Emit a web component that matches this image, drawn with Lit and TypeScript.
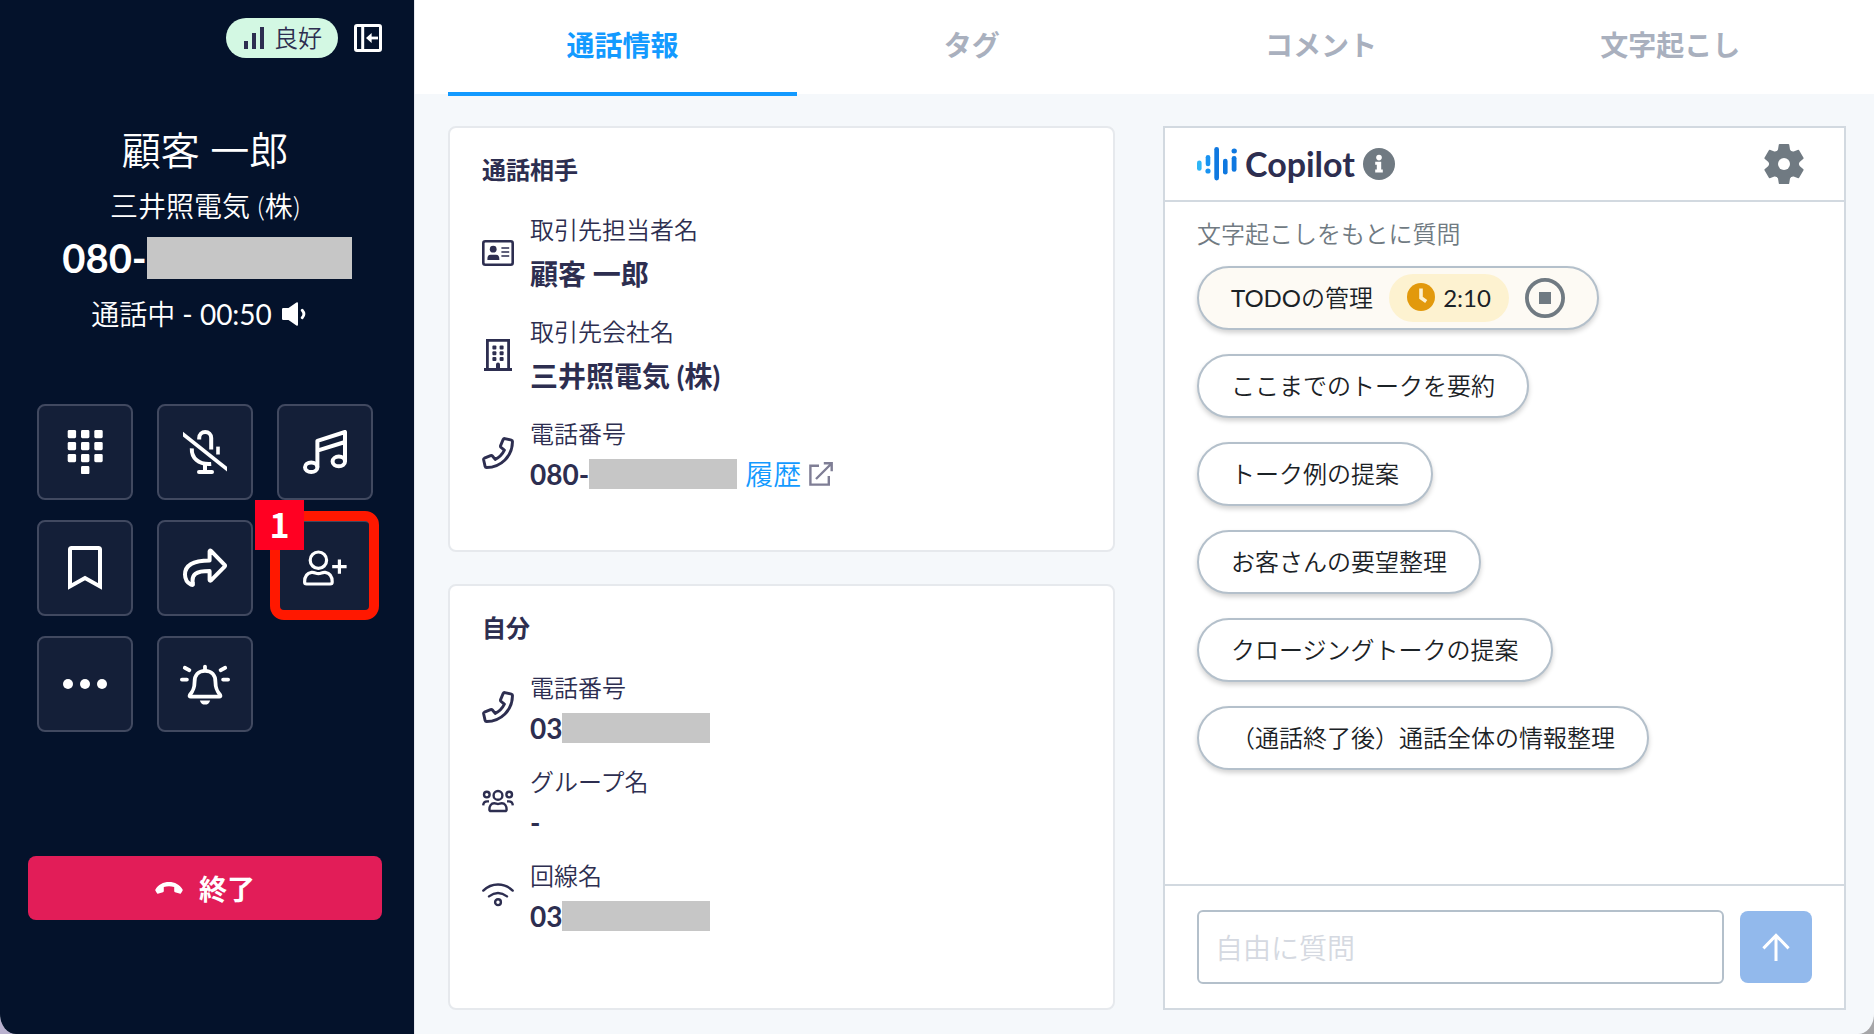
import { LitElement, html, svg, css, nothing } from "lit";
import { customElement, state } from "lit/decorators.js";

const icons = {
  signal: svg`<svg width="20" height="22" viewBox="0 0 20 22" fill="currentColor"><path d="M0 14h4v8H0zM8 6h4v16H8zM16 0h4v22h-4z"/></svg>`,
  collapse: svg`<svg width="28" height="28" viewBox="0 0 28 28" fill="none" stroke="currentColor" stroke-width="3"><rect x="1.5" y="1.5" width="25" height="25" rx="1.5"/><path d="M8.7 2v24"/><path d="M14.5 14H24" stroke-width="2.8"/><path d="M12 14l5.6-5v10z" fill="currentColor" stroke="none"/></svg>`,
  speaker: svg`<svg width="25" height="24" viewBox="0 0 25 24" fill="currentColor"><path d="M0 7.2Q0 6 1.2 6H6.5L14.4.4Q16 -.4 16 1.4V22.6Q16 24.4 14.4 23.6L6.5 18H1.2Q0 18 0 16.8z"/><path d="M20.2 8.2q3.4 3.8 0 7.6" fill="none" stroke="currentColor" stroke-width="2.8" stroke-linecap="round"/></svg>`,
  dialpad: svg`<svg width="44" height="44" viewBox="0 0 44 44" fill="currentColor">${[0, 12, 24].map((y) =>
    [4.7, 18, 31.3].map((x) => svg`<rect x=${x} y=${y} width="8.4" height="8.2" rx="1.4"/>`),
  )}<rect x="18" y="36" width="8.4" height="8.2" rx="1.4"/></svg>`,
  mute: svg`<svg width="44" height="44" viewBox="0 0 44 44" fill="none" stroke="currentColor" stroke-width="4"><path d="M16.2 9.6V8a6 6 0 0 1 12 0v11.6"/><path d="M35 16.6V24.5" stroke-width="3.6"/><path d="M8.8 18.4c-.4 9.4 6.4 16.6 19.4 15.6"/><path d="M22 34v7"/><path d="M16 42h13" stroke-linecap="round"/><path d="M0 1.8V6.6L44 41.6V36.8z" fill="currentColor" stroke="none"/></svg>`,
  music: svg`<svg width="44" height="44" viewBox="0 0 44 44" fill="none" stroke="currentColor" stroke-width="4" stroke-linejoin="round"><ellipse cx="8.2" cy="37.2" rx="6.2" ry="4.8"/><ellipse cx="35.8" cy="31.4" rx="6.2" ry="4.8"/><path d="M14.4 37.2V10.8L42 2V31.4M14.4 20.6L42 12"/></svg>`,
  bookmark: svg`<svg width="44" height="44" viewBox="0 0 44 44" fill="none" stroke="currentColor" stroke-width="4"><path d="M7 40.4V3.6Q7 2 8.6 2H35.4Q37 2 37 3.6V40.4L22 32z"/></svg>`,
  forward: svg`<svg width="44" height="44" viewBox="0 0 44 44" fill="none" stroke="currentColor" stroke-width="4" stroke-linejoin="round"><path d="M26.6 5.4V14.4C11 14.4 2 18.6 2 28.4C2 33.6 4.8 37 8.2 38.8Q10.4 39.8 9.8 37.2C8.4 28.6 12.4 25 26.6 25V34Q26.8 35.2 28 34.4L41.6 20.6Q42.4 19.7 41.6 18.8L28 4.8Q26.8 4 26.6 5.4z"/></svg>`,
  addUser: svg`<svg width="44" height="44" viewBox="0 0 44 44" fill="none" stroke="currentColor" stroke-width="3.2"><circle cx="15.4" cy="14.2" r="8.2"/><path d="M8.6 26.4C11.6 26 12.6 27.6 15.4 27.6S19.2 26 22.2 26.4C27.4 27.2 29.2 31.4 29.2 36Q29.2 38 27.2 38H3.6Q1.6 38 1.6 36C1.6 31.4 3.4 27.2 8.6 26.4z"/><path d="M36.4 13.6v14.2M29.2 20.7H43.6"/></svg>`,
  more: svg`<svg width="44" height="44" viewBox="0 0 44 44" fill="currentColor"><circle cx="5" cy="22" r="5"/><circle cx="22" cy="22" r="5"/><circle cx="39" cy="22" r="5"/></svg>`,
  bell: svg`<svg width="50" height="44" viewBox="0 0 50 44" fill="none" stroke="currentColor" stroke-width="3.8" stroke-linecap="round" stroke-linejoin="round"><path d="M25 8.8C18.4 8.8 14.6 13.4 14.6 19.6C14.6 27.2 12.4 30 9.8 33Q9 34.6 10.8 34.6H39.2Q41 34.6 40.2 33C37.6 30 35.4 27.2 35.4 19.6C35.4 13.4 31.6 8.8 25 8.8zM25 4.6v4M1.9 17.6h5M43.1 17.6h5M4.8 5.8l4.6 2.4M45.2 5.8l-4.6 2.4"/><path d="M19.8 38.4H30.2Q28.8 42.6 25 42.6T19.8 38.4z" fill="currentColor" stroke="none"/></svg>`,
  hangup: svg`<svg width="28" height="12" viewBox="0 0 28 12" fill="currentColor"><path d="M.4 7.4C3.2 2.6 8.2 0 14 0s10.8 2.6 13.6 7.4Q28 8.2 27.4 9L26 11.2Q25.4 12 24.4 11.6L20 10.2Q19.2 9.900 19.2 9V5Q14 3.6 8.800 5V9Q8.8 9.900 8 10.2L3.6 11.6Q2.6 12 2 11.2L.6 9Q0 8.2 .4 7.4z"/></svg>`,
  idCard: svg`<svg width="32" height="26" viewBox="0 0 32 26" fill="none" stroke="currentColor" stroke-width="2.6"><rect x="1.3" y="1.3" width="29.4" height="23.4" rx="2"/><circle cx="11.2" cy="9.2" r="3.4" fill="currentColor" stroke="none"/><path d="M5.4 20Q5 14.8 8.6 14.8H14Q17.6 14.8 17.4 20z" fill="currentColor" stroke="none"/><path d="M19.4 8h7.8M19.4 12h7.8M19.4 16h7.8" stroke-width="1.6"/></svg>`,
  building: svg`<svg width="28" height="32" viewBox="0 0 28 32" fill="currentColor"><path d="M2 0H26V29H28V32H0V29H2zM4.8 2.8V29H12V25.6a2 2 0 0 1 4 0V29H23.2V2.8z" fill-rule="evenodd"/>${[6.4, 12.2, 18].map((y) =>
    [8.4, 15.6].map((x) => svg`<rect x=${x} y=${y} width="4" height="4" rx="1"/>`),
  )}</svg>`,
  phone: svg`<svg width="32" height="32" viewBox="0 0 32 32" fill="none" stroke="currentColor" stroke-width="2.9" stroke-linejoin="round"><path d="M22.8 1.6L29.4 3.1Q30.5 3.4 30.5 4.6C30.5 19 19 30.5 4.6 30.5Q3.4 30.5 3.1 29.4L1.6 22.8Q1.4 21.7 2.4 21.2L8.6 18.6Q9.7 18.2 10.4 19L13.2 22.4Q19.4 19.4 22.4 13.2L19 10.4Q18.2 9.7 18.6 8.6L21.2 2.4Q21.7 1.4 22.8 1.6z"/></svg>`,
  group: svg`<svg width="32" height="24" viewBox="0 0 32 24" fill="none" stroke="currentColor" stroke-width="2.4"><circle cx="16" cy="6.4" r="4.4"/><circle cx="4.8" cy="5.6" r="2.8"/><circle cx="27.2" cy="5.6" r="2.8"/><path d="M12.2 14.2C14 14.2 14.6 15 16 15S18 14.2 19.8 14.2C23 14.2 24.6 17.2 24.6 20.4Q24.6 22 23 22H9Q7.4 22 7.4 20.4C7.4 17.2 9 14.2 12.2 14.2z"/><path d="M1.2 16.4Q1.4 12.4 5.2 12.4H7M30.8 16.4Q30.6 12.4 26.8 12.4H25"/></svg>`,
  wifi: svg`<svg width="32" height="24" viewBox="0 0 32 24" fill="none" stroke="currentColor" stroke-width="2.4" stroke-linecap="round"><path d="M1.3 7.6C9.6 -.6 22.4 -.6 30.7 7.6M7 13.4Q16 6.8 25 13.4"/><circle cx="16" cy="19.2" r="2.9"/></svg>`,
  external: svg`<svg width="24" height="24" viewBox="0 0 24 24" fill="none" stroke="currentColor" stroke-width="2.4"><path d="M10 3.8H1.4V22.6H19.8V14M7 17L22 2M14.8 1.3H22.7V9.2"/></svg>`,
  logo: svg`<svg width="40" height="34" viewBox="0 0 40 34"><rect x="0" y="13.4" width="4.6" height="10.4" rx="2.3" fill="#2eb6f6"/><g fill="#1993f1"><rect x="8.7" y="8" width="4.6" height="11.2" rx="2.3"/><circle cx="11" cy="24" r="2.6"/></g><g fill="#0f78e0"><rect x="17.3" y="0" width="4.7" height="33.4" rx="2.3"/><rect x="26" y="11.7" width="4.6" height="15.8" rx="2.3"/><rect x="34.7" y="9" width="4.8" height="15.8" rx="2.3"/><ellipse cx="37.2" cy="4" rx="2.7" ry="2.5"/></g></svg>`,
  info: svg`<svg width="32" height="32" viewBox="0 0 32 32"><circle cx="16" cy="16" r="16" fill="#707a82"/><circle cx="16" cy="9.6" r="2.8" fill="#fff"/><path d="M12.2 13.8H18.2V21.6H19.8V24.6H12.2V21.6H13.8V16.8H12.2z" fill="#fff"/></svg>`,
  gear: svg`<svg width="40" height="40" viewBox="-20 -20 40 40"><g fill="#707a82"><circle r="14.6"/>${[0, 60, 120, 180, 240, 300].map(
    (a) => svg`<path d="M-4.4-20H4.4Q5-20 5.2-19.4L6-14.6Q6.6-12.6 9-12H-9Q-6.6-12.6-6-14.6L-5.2-19.4Q-5-20-4.4-20z" transform="rotate(${a})"/>`,
  )}</g><circle r="6" fill="#fff"/></svg>`,
  clock: svg`<svg width="28" height="28" viewBox="0 0 28 28"><circle cx="14" cy="14" r="14" fill="#e2990c"/><path d="M14 5.6V14.8L19.2 18.4" fill="none" stroke="#fdf2d0" stroke-width="3.6"/></svg>`,
  stop: svg`<svg width="40" height="40" viewBox="0 0 40 40"><circle cx="20" cy="20" r="18.1" fill="none" stroke="#707a82" stroke-width="3.8"/><path d="M14 14h12v12H14z" fill="#707a82"/></svg>`,
  arrowUp: svg`<svg width="28" height="28" viewBox="0 0 28 28" fill="none" stroke="currentColor" stroke-width="3"><path d="M14 28V2M1.4 15.4L14 2.4L26.6 15.4"/></svg>`,
};

const actions = [
  { label: "ダイヤルパッド", icon: icons.dialpad },
  { label: "ミュート", icon: icons.mute },
  { label: "保留", icon: icons.music },
  { label: "ブックマーク", icon: icons.bookmark },
  { label: "転送", icon: icons.forward },
  { label: "参加者を追加", icon: icons.addUser, mark: "1" },
  { label: "その他", icon: icons.more },
  { label: "呼び出し", icon: icons.bell },
];

const tabs = ["通話情報", "タグ", "コメント", "文字起こし"];

const prompts = [
  "ここまでのトークを要約",
  "トーク例の提案",
  "お客さんの要望整理",
  "クロージングトークの提案",
  "（通話終了後）通話全体の情報整理",
];

@customElement("app-root")
export class AppRoot extends LitElement {
  @state() private tab = 0;

  static styles = css`
    :host {
      display: block;
      background: linear-gradient(90deg, #b9b1cf 0 50%, #a6a6a8 50%);
      font-family: Lato, "Noto Sans CJK JP", sans-serif;
      color: #2d2e50;
    }
    * {
      box-sizing: border-box;
    }
    svg {
      display: block;
      flex: none;
    }
    button {
      font: inherit;
      color: inherit;
      border: 0;
      padding: 0;
      background: none;
      cursor: pointer;
    }
    h1,
    h2,
    p {
      margin: 0;
    }
    .app {
      display: grid;
      grid-template-columns: 414px 1fr;
      min-height: 100vh;
      background: #f5f8fb;
      border-radius: 0 0 16px 16px / 0 0 20px 20px;
      overflow: hidden;
    }
    .side {
      display: flex;
      flex-direction: column;
      padding: 18px 32px 28px 28px;
      background: #04122b;
      color: #fff;
      text-align: center;
    }
    .top {
      display: flex;
      justify-content: flex-end;
      align-items: center;
      gap: 16px;
      height: 40px;
      margin-bottom: 66px;
    }
    .quality {
      display: flex;
      align-items: center;
      gap: 10px;
      height: 40px;
      padding: 0 16px 0 18px;
      border-radius: 20px;
      background: #d3f8e3;
      color: #2d2e50;
      font-size: 24px;
      font-weight: 350;
      line-height: 40px;
    }
    .name {
      font-size: 39px;
      font-weight: 350;
      line-height: 52px;
      margin-bottom: 8px;
    }
    .company {
      font-size: 28px;
      font-weight: 350;
      line-height: 44px;
    }
    .tel {
      display: flex;
      justify-content: center;
      align-items: center;
      font-size: 40px;
      font-weight: 700;
      line-height: 44px;
      padding-left: 4px;
      margin: 8px 0 12px;
    }
    .mask {
      width: 148px;
      height: 30px;
      background: #c6c6c6;
    }
    .tel .mask {
      width: 205px;
      height: 42px;
    }
    .status {
      display: flex;
      justify-content: center;
      align-items: center;
      gap: 10px;
      padding-right: 12px;
      font-size: 28px;
      line-height: 44px;
    }
    .light {
      font-weight: 350;
    }
    .pad {
      display: grid;
      grid-template-columns: repeat(3, 96px);
      justify-content: center;
      gap: 20px 24px;
      margin: 68px 0 124px;
    }
    .cell {
      position: relative;
    }
    .key {
      display: grid;
      place-items: center;
      width: 96px;
      height: 96px;
      border: 2px solid #414960;
      border-radius: 8px;
      background: #141f38;
      color: #fff;
    }
    .ring {
      position: absolute;
      inset: -9px -6px -4px -7px;
      border: 10px solid #ff1800;
      border-radius: 14px;
      pointer-events: none;
    }
    .badge {
      position: absolute;
      top: -20px;
      left: -22px;
      width: 49px;
      height: 50px;
      background: #ff0022;
      font: 700 34px/48px "Noto Sans CJK JP", sans-serif;
    }
    .end {
      display: flex;
      justify-content: center;
      align-items: center;
      gap: 16px;
      height: 64px;
      border-radius: 8px;
      background: #e21d58;
      color: #fff;
      font-size: 28px;
      font-weight: 700;
    }
    .main {
      display: flex;
      flex-direction: column;
      min-width: 0;
      border-left: 1px solid #e6e8ee;
    }
    .tabs {
      display: flex;
      height: 94px;
      padding: 0 29px 0 33px;
      background: #fff;
    }
    .tab {
      flex: 1;
      height: 96px;
      padding-bottom: 4px;
      border-bottom: 4px solid transparent;
      font-size: 28px;
      font-weight: 700;
      color: #a9b0be;
    }
    .tab.on {
      color: #139aff;
      border-color: #139aff;
    }
    .content {
      flex: 1;
      display: grid;
      grid-template-columns: 667fr 683fr;
      gap: 48px;
      padding: 32px 28px 24px 33px;
    }
    .cards {
      display: grid;
      grid-template-rows: 1fr 1fr;
      gap: 32px;
    }
    .card {
      display: flex;
      flex-direction: column;
      gap: 14px;
      padding: 24px 32px;
      border: 2px solid #e6e9ed;
      border-radius: 8px;
      background: #fff;
    }
    .card-title {
      font-size: 24px;
      line-height: 36px;
      margin-bottom: 10px;
    }
    .row {
      display: flex;
      align-items: center;
      gap: 16px;
    }
    .row-icon {
      display: grid;
      place-items: center;
      width: 32px;
      padding-bottom: 6px;
    }
    .label {
      font-size: 24px;
      font-weight: 350;
      line-height: 36px;
    }
    .value {
      display: flex;
      align-items: center;
      font-size: 28px;
      font-weight: 700;
      line-height: 44px;
      height: 44px;
    }
    .value.tall {
      line-height: 52px;
      height: 52px;
    }
    .history {
      display: flex;
      align-items: center;
      gap: 8px;
      margin-left: 8px;
      color: #139aff;
      font-weight: 350;
      text-decoration: none;
    }
    .history svg {
      color: #7f7e95;
    }
    .panel {
      display: flex;
      flex-direction: column;
      border: 2px solid #d2d9e0;
      background: #fff;
    }
    .panel-head {
      display: flex;
      align-items: center;
      gap: 8px;
      height: 74px;
      padding: 0 40px 0 32px;
      border-bottom: 2px solid #d2d9e0;
    }
    .panel-title {
      font-size: 34px;
      line-height: 40px;
    }
    .settings {
      margin-left: auto;
    }
    .panel-body {
      flex: 1;
      padding: 14px 32px 32px;
    }
    .hint {
      margin-bottom: 14px;
      font-size: 24px;
      font-weight: 350;
      line-height: 36px;
      color: #707a82;
    }
    .chips {
      display: flex;
      flex-direction: column;
      align-items: flex-start;
      gap: 24px;
    }
    .chip {
      display: flex;
      align-items: center;
      gap: 16px;
      height: 64px;
      padding: 0 32px;
      border: 2px solid #b4c0cb;
      border-radius: 32px;
      background: #fff;
      box-shadow: 0 3px 5px rgba(0, 0, 0, 0.18);
      font-size: 24px;
      color: #1b2226;
    }
    .chip.busy {
      background: #fdfaf4;
    }
    .chip-text {
      padding-bottom: 4px;
    }
    .timer {
      display: flex;
      align-items: center;
      justify-content: center;
      gap: 8px;
      min-width: 120px;
      height: 48px;
      padding: 0 16px 2px;
      border-radius: 24px;
      background: #fdf2d0;
    }
    .ask {
      display: flex;
      align-items: center;
      gap: 16px;
      padding: 24px 32px;
      border-top: 2px solid #d2d9e0;
    }
    .input {
      flex: 1;
      min-width: 0;
      height: 74px;
      padding: 2px 16px 0;
      border: 2px solid #b4c0cb;
      border-radius: 6px;
      font: 350 28px Lato, "Noto Sans CJK JP", sans-serif;
      color: #2d2e50;
      background: #fff;
    }
    .input::placeholder {
      color: #d5d9e1;
      opacity: 1;
    }
    .send {
      display: grid;
      place-items: center;
      width: 72px;
      height: 72px;
      border-radius: 8px;
      background: #92b9ec;
      color: #fff;
    }
  `;

  private row(icon: unknown, label: string, value: unknown, tall = false) {
    return html`<div class="row">
      <div class="row-icon">${icon}</div>
      <div>
        <div class="label">${label}</div>
        <div class="value ${tall ? "tall" : ""}">${value}</div>
      </div>
    </div>`;
  }

  render() {
    const mask = html`<span class="mask"></span>`;
    return html`<div class="app">
      <aside class="side">
        <div class="top">
          <div class="quality">${icons.signal}<span>良好</span></div>
          <button aria-label="サイドバーを閉じる">${icons.collapse}</button>
        </div>
        <h1 class="name">顧客 一郎</h1>
        <p class="company">三井照電気 (株)</p>
        <div class="tel"><span>080-</span>${mask}</div>
        <div class="status">
          <span><span class="light">通話中</span> - 00:50</span>${icons.speaker}
        </div>
        <div class="pad">
          ${actions.map(
            (a) => html`<div class="cell">
              <button class="key" aria-label=${a.label}>${a.icon}</button>
              ${a.mark ? html`<div class="ring"></div><div class="badge">${a.mark}</div>` : nothing}
            </div>`,
          )}
        </div>
        <button class="end">${icons.hangup}<span>終了</span></button>
      </aside>
      <main class="main">
        <div class="tabs" role="tablist">
          ${tabs.map(
            (t, i) => html`<button
              class="tab ${i === this.tab ? "on" : ""}"
              role="tab"
              aria-selected=${i === this.tab}
              @click=${() => (this.tab = i)}
            >
              ${t}
            </button>`,
          )}
        </div>
        <div class="content">
          <div class="cards">
            <section class="card">
              <h2 class="card-title">通話相手</h2>
              ${this.row(icons.idCard, "取引先担当者名", "顧客 一郎", true)}
              ${this.row(icons.building, "取引先会社名", "三井照電気 (株)", true)}
              ${this.row(
                icons.phone,
                "電話番号",
                html`<span>080-</span>${mask}<a class="history" href="#history">履歴${icons.external}</a>`,
              )}
            </section>
            <section class="card">
              <h2 class="card-title">自分</h2>
              ${this.row(icons.phone, "電話番号", html`<span>03</span>${mask}`)}
              ${this.row(icons.group, "グループ名", "-")}
              ${this.row(icons.wifi, "回線名", html`<span>03</span>${mask}`)}
            </section>
          </div>
          <section class="panel">
            <div class="panel-head">
              ${icons.logo}
              <h2 class="panel-title">Copilot</h2>
              <button aria-label="情報">${icons.info}</button>
              <button class="settings" aria-label="設定">${icons.gear}</button>
            </div>
            <div class="panel-body">
              <p class="hint">文字起こしをもとに質問</p>
              <div class="chips">
                <div class="chip busy">
                  <span class="chip-text">TODO<span class="light">の管理</span></span>
                  <span class="timer">${icons.clock}<span>2:10</span></span>
                  <button aria-label="停止">${icons.stop}</button>
                </div>
                ${prompts.map((p) => html`<button class="chip light"><span class="chip-text">${p}</span></button>`)}
              </div>
            </div>
            <form class="ask" @submit=${(e: Event) => e.preventDefault()}>
              <input class="input" type="text" aria-label="自由に質問" placeholder="自由に質問" />
              <button class="send" aria-label="送信">${icons.arrowUp}</button>
            </form>
          </section>
        </div>
      </main>
    </div>`;
  }
}
